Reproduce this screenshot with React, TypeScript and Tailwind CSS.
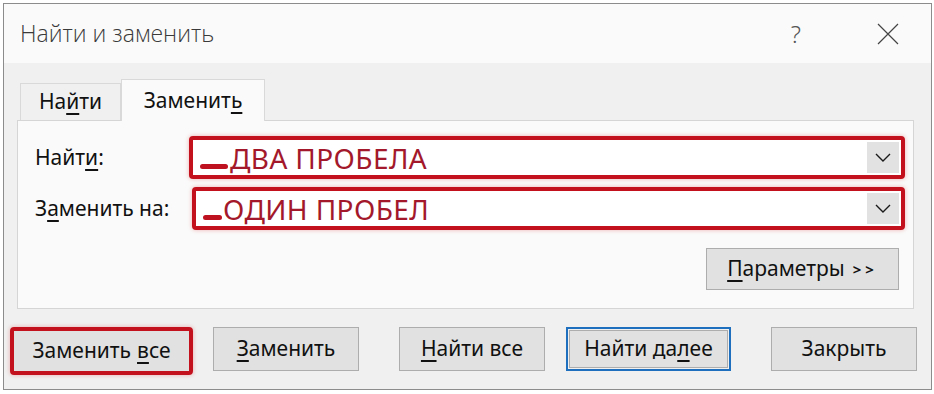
import React from "react";

const font = { fontFamily: '"Noto Sans", "Open Sans", Arial, sans-serif' };

function Btn({
  children,
  className = "",
}: {
  children: React.ReactNode;
  className?: string;
}) {
  return (
    <div
      className={`flex items-center justify-center bg-[#e1e1e1] border border-[#adadad] text-[21px] text-[#111] ${className}`}
    >
      {children}
    </div>
  );
}

function Combo({ children }: { children: React.ReactNode }) {
  return (
    <div className="flex h-[43px] flex-1 items-stretch rounded-[4px] border-[4px] border-[#c3121e] bg-white shadow-[0_0_4px_rgba(220,40,40,0.35)]">
      <div className="flex flex-1 items-center pl-[7px] text-[28px] leading-none tracking-[0.4px] text-[#a3192b]">
        {children}
      </div>
      <div className="my-[2px] mr-[2px] flex w-[32px] items-center justify-center bg-[#e2e2e2]">
        <svg width="16" height="9" viewBox="0 0 16 9">
          <path d="M1 1 L8 8 L15 1" fill="none" stroke="#1a1a1a" strokeWidth="1.4" />
        </svg>
      </div>
    </div>
  );
}

export default function App() {
  return (
    <div
      className="w-[934px] h-[394px] bg-white pl-[3px] pt-[3px]"
      style={font}
    >
      <div className="flex h-[387px] w-[929px] flex-col border border-[#8c8c8c]">
        {/* title bar */}
        <div className="flex h-[59px] items-center bg-[#fafafa] pl-[16px] pr-[32px]">
          <span
            className="flex-1 text-[23px] font-light text-[#3a3a3a]"
            style={{ fontFamily: '"Open Sans", "Noto Sans", sans-serif' }}
          >
            Найти и заменить
          </span>
          <span className="mr-[76px] text-[24px] font-light text-[#555]">?</span>
          <svg width="22" height="22" viewBox="0 0 22 22">
            <path d="M1 1 L21 21 M21 1 L1 21" stroke="#444" strokeWidth="1.2" />
          </svg>
        </div>

        {/* body */}
        <div className="flex flex-1 flex-col bg-[#f0f0f0]">
          {/* tabs */}
          <div className="flex h-[57px] items-end pl-[16px]">
            <div className="flex h-[37px] w-[101px] items-center justify-center border border-b-0 border-[#d9d9d9] text-[21px] text-[#111]">
              На<span className="underline underline-offset-[4px]">й</span>ти
            </div>
            <div className="relative z-10 -mb-px flex h-[42px] w-[144px] items-center justify-center border border-b-0 border-[#d9d9d9] bg-[#fafafa] text-[21px] text-[#111]">
              Замени<span>т</span>
              <span className="underline underline-offset-[4px]">ь</span>
            </div>
          </div>

          {/* panel */}
          <div className="ml-[13px] flex h-[189px] w-[897px] flex-col border border-[#d5d5d5] bg-[#fafafa] pl-[17px] pr-[8px] pt-[15px]">
            <div className="flex items-center">
              <div className="w-[154px] text-[21px] text-[#111]">
                Найт<span className="underline underline-offset-[4px]">и</span>:
              </div>
              <Combo>
                <span className="mr-[2px] mt-[18px] inline-block h-[5px] w-[28px] rounded-full bg-[#bf1220]" />
                ДВА ПРОБЕЛА
              </Combo>
            </div>
            <div className="mt-[8px] flex items-center">
              <div className="w-[157px] text-[21px] text-[#111]">
                З<span className="underline underline-offset-[4px]">а</span>менить на:
              </div>
              <Combo>
                <span className="mr-[1px] mt-[18px] inline-block h-[5px] w-[19px] rounded-full bg-[#bf1220]" />
                ОДИН ПРОБЕЛ
              </Combo>
            </div>
            <div className="mt-[18px] flex justify-end pr-[6px]">
              <Btn className="h-[42px] w-[193px]">
                <span className="underline underline-offset-[4px]">П</span>араметры
                <span className="ml-[8px] text-[15px] font-bold tracking-[4px]">&gt;&gt;</span>
              </Btn>
            </div>
          </div>

          {/* bottom buttons */}
          <div className="mt-[18px] flex items-start pl-[6px]">
            <div className="rounded-[4px] border-[4px] border-[#c3121e] shadow-[0_0_4px_rgba(220,40,40,0.35)]">
              <Btn className="h-[40px] w-[175px] border-[#e1e1e1]">
                Заменить <span className="ml-[6px] underline underline-offset-[4px]">в</span>се
              </Btn>
            </div>
            <Btn className="ml-[20px] h-[44px] w-[146px]">
              <span className="underline underline-offset-[4px]">З</span>аменить
            </Btn>
            <Btn className="ml-[40px] h-[44px] w-[146px]">
              <span className="underline underline-offset-[4px]">Н</span>айти все
            </Btn>
            <div className="ml-[21px] h-[44px] w-[165px] border-2 border-[#1f6fbf] p-px">
              <Btn className="h-full w-full border-[#8cc0ec]">
                Найти да<span className="underline underline-offset-[4px]">л</span>ее
              </Btn>
            </div>
            <Btn className="ml-[40px] h-[44px] w-[146px]">Закрыть</Btn>
          </div>
        </div>
      </div>
    </div>
  );
}
